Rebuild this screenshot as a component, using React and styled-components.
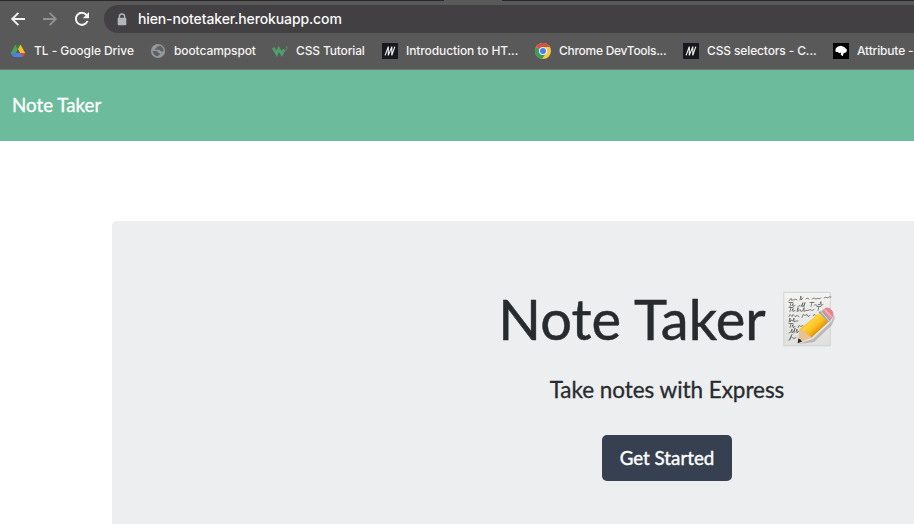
import React from "react";
import styled, { createGlobalStyle } from "styled-components";

const GlobalStyle = createGlobalStyle`
  * { box-sizing: border-box; }
  html, body { margin: 0; background: #fff; overflow: hidden; }
`;

const Page = styled.div`
  width: 100vw;
  height: 524px;
  overflow: hidden;
  font-family: Lato, sans-serif;
  color: #272b2e;
`;

const Browser = styled.header`
  height: 70px;
  background: #595959;
  border-bottom: 1px solid #6f7573;
  font-family: Inter, sans-serif;
  color: #f4f4f4;
  overflow: hidden;
`;

const TabEdge = styled.div`
  display: flex;
  justify-content: space-between;
  height: 1px;
`;

const TabStrip = styled.div`
  width: ${(p) => p.$width}px;
  height: 1px;
  background: #29282b;
`;

const Toolbar = styled.div`
  display: flex;
  align-items: center;
  height: 36px;
  padding-left: 10px;
`;

const NavButton = styled.div`
  width: 16px;
  height: 16px;
  margin-right: 16px;
  color: ${(p) => (p.$muted ? "#919191" : "#f4f4f4")};
  svg { display: block; }
`;

const AddressBar = styled.div`
  flex: 1;
  height: 28px;
  margin-left: -2px;
  padding-left: 13px;
  display: flex;
  align-items: center;
  gap: 11px;
  border-radius: 14px 0 0 14px;
  background: #424043;
`;

const Address = styled.span`
  font-size: 14px;
  font-weight: 500;
  line-height: 20px;
  letter-spacing: -0.12px;
  color: #fafafa;
`;

const Bookmarks = styled.nav`
  display: flex;
  height: 28px;
  padding-left: 10px;
`;

const Bookmark = styled.div`
  display: flex;
  flex: 0 0 ${(p) => p.$width}px;
  align-items: center;
  gap: 8px;
  white-space: nowrap;
  font-size: 12px;
  font-weight: 500;
  line-height: 16px;
  letter-spacing: ${(p) => p.$spacing}px;
  svg { flex: none; }
`;

const SiteNav = styled.nav`
  height: 71px;
  padding: 0 12px 2px;
  display: flex;
  align-items: center;
  background: #6dbb9d;
`;

const Brand = styled.span`
  font-size: 18.75px;
  line-height: 28px;
  -webkit-text-stroke: 0.3px currentColor;
  color: #fff;
`;

const Jumbotron = styled.main`
  width: 1110px;
  height: 340px;
  margin: 80px 0 0 112px;
  padding-top: 64px;
  display: flex;
  flex-direction: column;
  align-items: center;
  border-radius: 5px;
  background: #edeef0;
`;

const Title = styled.h1`
  display: flex;
  align-items: center;
  margin: 0;
  height: 67px;
  font-size: 56px;
  font-weight: 400;
  line-height: 67px;
  letter-spacing: 0.1px;
  -webkit-text-stroke: 0.5px currentColor;
`;

const MemoIcon = styled.svg`
  display: block;
  width: 56px;
  height: 60px;
  margin-left: 14px;
`;

const Subtitle = styled.h4`
  margin: 24px 0 31px;
  font-size: 22.5px;
  line-height: 28px;
  font-weight: 400;
  letter-spacing: -0.05px;
  -webkit-text-stroke: 0.3px currentColor;
`;

const Button = styled.button`
  width: 130px;
  height: 46px;
  padding: 0;
  border: 0;
  border-radius: 5px;
  background: #364050;
  color: #fff;
  font: 400 18.75px/28px Lato, sans-serif;
  -webkit-text-stroke: 0.4px currentColor;
`;

const Arrow = ({ flip }) => (
  <svg width="16" height="16" viewBox="0 0 16 16" fill="none" stroke="currentColor" strokeWidth="1.9">
    <g transform={flip ? "translate(16 0) scale(-1 1)" : undefined}>
      <path d="M15 8H2.5M8.4 1.8 2.2 8l6.2 6.2" />
    </g>
  </svg>
);

const Reload = () => (
  <svg width="16" height="16" viewBox="0 0 16 16" fill="none">
    <path d="M13.5 10A6 6 0 1 1 12.5 4L14 5.5" stroke="currentColor" strokeWidth="2" />
    <path d="M15 1v6.2H8.8z" fill="currentColor" />
  </svg>
);

const Lock = () => (
  <svg width="10" height="13" viewBox="0 0 10 13">
    <path d="M2.4 6V3.6a2.6 2.6 0 0 1 5.2 0V6" fill="none" stroke="#b2b5b9" strokeWidth="1.4" />
    <rect x=".7" y="4.8" width="8.6" height="7.4" rx="1" fill="#b2b5b9" />
  </svg>
);

const Drive = () => (
  <svg width="16" height="16" viewBox="0 0 16 16">
    <path d="M5.4 1.5 8 6 3.5 14 .8 10z" fill="#4ba35b" />
    <path d="M5.4 1.5h5.1L8 6z" fill="#327f43" />
    <path d="m10.5 1.5 4.8 8.8h-5L8 6z" fill="#f4c02e" />
    <path d="M5.8 10h4.6l2.1 4h-9z" fill="#4b7feb" />
    <path d="M10.3 10.3h5L12.6 14z" fill="#dc4e41" />
    <path d="m.8 10 2.7 4L5.8 10z" fill="#4b7feb" />
  </svg>
);

const Globe = () => (
  <svg width="16" height="16" viewBox="0 0 16 16">
    <circle cx="8" cy="8" r="7.1" fill="#94989d" />
    <path d="M2.5 8.1h3.7q1.8.2 1.7 2h1.8v1.4l-2 1.8Q3.8 13 2.5 8.1M9.6 2.4l-.6 1-2.3.2v2H5v1.2h4.8q.5 1.6 2.1 1.6h1.6Q13.8 4 9.6 2.4" fill="#5e6062" />
  </svg>
);

const W3 = () => (
  <svg width="16" height="16" viewBox="0 0 16 16" fill="none" stroke="#4ea16c">
    <path d="m1.2 4.8 3.5 6.1 2-5 3.1 5 2.4-4.5" strokeWidth="2.8" />
    <path d="M13.7 3.7h1.6l-.9 1.3q1.2.1.7 1.5-.5.8-1.5.1" strokeWidth=".7" />
  </svg>
);

const Mdn = () => (
  <svg width="16" height="16" viewBox="0 0 16 16">
    <path fill="#17181d" d="M0 0h16v16H0z" />
    <path d="M3.1 12.4 6.3 3.6v8.8l3.5-8.8v8.8l3-8.8" fill="none" stroke="#eee" strokeWidth="1.15" />
  </svg>
);

const Chrome = () => (
  <svg width="16" height="16" viewBox="0 0 16 16">
    <circle cx="8" cy="8" r="8" fill="#f7ca43" />
    <path d="M8 8 1 4a8 8 0 0 0 6.2 12L11 10z" fill="#409b5b" />
    <path d="M8 8 1.1 4A8 8 0 0 1 15 4H8z" fill="#d94e3f" />
    <circle cx="8" cy="8" r="4" fill="#f5f5f5" />
    <circle cx="8" cy="8" r="3" fill="#4680e8" />
  </svg>
);

const Tree = () => (
  <svg width="16" height="16" viewBox="0 0 16 16">
    <path fill="#000" d="M0 0h16v16H0z" />
    <path fill="#fff" d="M2.3 7.3 3 5l2-1.5 3-.7 3.2 1.1L14 6.8l-.7 2.5-2.7 1-.9 3-2.1-1.8.7-2.1-2.1.8-1.4-1.3-2 .2z" />
  </svg>
);

const links = [
  { label: "TL - Google Drive", Icon: Drive, width: 140, spacing: -0.06 },
  { label: "bootcampspot", Icon: Globe, width: 122, spacing: -0.1 },
  { label: "CSS Tutorial", Icon: W3, width: 110, spacing: -0.15 },
  { label: "Introduction to HT...", Icon: Mdn, width: 153, spacing: -0.1 },
  { label: "Chrome DevTools...", Icon: Chrome, width: 148, spacing: -0.28 },
  { label: "CSS selectors - C...", Icon: Mdn, width: 150, spacing: -0.13 },
  { label: "Attribute -", Icon: Tree, width: 81, spacing: -0.17 },
];

const handwriting = [
  { y: 12, d: "M9 0q3-5 2-1l3 0 2-1 1 1m3 0 1-4v4l2-2m3 1 1-1 2 1m3 0 2-1 2 1 2-1 1 1 2-1m3 0 2-1 1 1 2-1 2 0" },
  { y: 17.5, d: "M9-4h4m-2 0-1 4m2-1 1-2v3l2-1m3 1 2-1 1 1 2-4-1 4 2-1 1-3-1 4m6-4h4m-2 0-1 4m3-1 1-1 2 1 1-1 2 0 1-3v4l2-1" },
  { y: 22.5, d: "M9-4h4m-2 0-1 4m2-1 1-2v3l2-1m2 1 1-4v4l2-2 1 2 2-1 1-3v4l2-1 2 0 2-1 2 1 2-1m3-3h4m-2 0-1 4" },
  { y: 27.5, d: "M9 0l1-2 2 2 1-2 2 2 2-1 2 1m3 1 1-3 2 1 2-1 1 2 2-1m3 0 2-1 1 1m3 0 1-4-1 4" },
  { y: 33, d: "m9 0 1-4v4l1-2 2 1 1-3v4l2-1 2 0" },
  { y: 38.5, d: "M9-4h4m-2 0-1 4m2-1 1-2v3l2-1m3 1 1-2 2 1 2-1m3 1 1-2 2 1 1-1" },
  { y: 44, d: "m9 0 2-1 1-3v4l2-2 1-3-1 5m2-1 1-3v4l2-2 2 1" },
  { y: 49.5, d: "m9 2 3-6-2 5m2-2 2 1 2-1" },
];

const Memo = () => (
  <MemoIcon viewBox="0 0 56 60" role="img" aria-label="memo">
    <defs>
      <linearGradient id="paper" x1="0" y1="0" x2="0" y2="1">
        <stop stopColor="#f3f3f2" />
        <stop offset="1" stopColor="#dfdfde" />
      </linearGradient>
      <linearGradient id="pencil" gradientUnits="userSpaceOnUse" x1="29" y1="29" x2="41" y2="42">
        <stop stopColor="#e9aa19" />
        <stop offset=".25" stopColor="#ffd43b" />
        <stop offset=".6" stopColor="#fcbd1d" />
        <stop offset="1" stopColor="#d78307" />
      </linearGradient>
    </defs>
    <rect x="3.8" y="3.3" width="46.5" height="53.5" fill="url(#paper)" stroke="#d1d3d3" />
    <g fill="none" stroke="#555" strokeWidth=".7" strokeLinecap="round" strokeLinejoin="round">
      {handwriting.map(({ y, d }) => <path key={y} d={d} transform={`translate(0 ${y})`} />)}
    </g>
    <path d="m18 55 15-5 18-17 3-7 1 3-3 7-18 17z" fill="#555" opacity=".3" />
    <path d="m19.3 40.5 23-19 8.2 9.6-19.2 17.6z" fill="url(#pencil)" />
    <path d="m19.3 40.5-1.6 13.8 13.6-5.6q-1-3-4.5-3.2-1.8-4.5-7.5-5z" fill="#e9c293" />
    <path d="m18.2 49.5-.5 4.8 4.4-1.8q-1.2-2.7-3.9-3z" fill="#292b2d" />
    <path d="m39.6 23.7 2.9-2.4 8.2 9.6-2.7 2.5z" fill="#9ca6ab" />
    <path d="m41 22.5 8.2 9.6" stroke="#e5e8e9" strokeWidth=".9" />
    <path d="m42.5 21.3 2.8-2.2q2.9-1.7 6.1 1.7 3.2 3.5 1.6 6.8l-2.3 3.3z" fill="#e7838d" />
    <path d="m44.8 20.7 6.6 7.5" stroke="#f7b3bb" strokeWidth="1.8" />
  </MemoIcon>
);

export default function App() {
  return (
    <Page>
      <GlobalStyle />
      <Browser>
        <TabEdge><TabStrip $width={444} /><TabStrip $width={412} /></TabEdge>
        <Toolbar>
          <NavButton><Arrow /></NavButton>
          <NavButton $muted><Arrow flip /></NavButton>
          <NavButton><Reload /></NavButton>
          <AddressBar><Lock /><Address>hien-notetaker.herokuapp.com</Address></AddressBar>
        </Toolbar>
        <Bookmarks>
          {links.map(({ label, Icon, width, spacing }) => (
            <Bookmark key={label} $width={width} $spacing={spacing}><Icon />{label}</Bookmark>
          ))}
        </Bookmarks>
      </Browser>
      <SiteNav><Brand>Note Taker</Brand></SiteNav>
      <Jumbotron>
        <Title>Note Taker <Memo /></Title>
        <Subtitle>Take notes with Express</Subtitle>
        <Button>Get Started</Button>
      </Jumbotron>
    </Page>
  );
}
